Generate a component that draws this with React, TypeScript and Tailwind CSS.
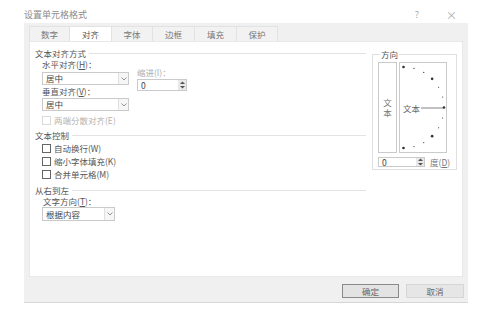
import React from 'react'

const tabs = [
	{ label: '数字', w: 'w-[41px]' },
	{ label: '对齐', w: 'w-[42px]', active: true },
	{ label: '字体', w: 'w-[41px]' },
	{ label: '边框', w: 'w-[42px]' },
	{ label: '填充', w: 'w-[42px]' },
	{ label: '保护', w: 'w-[41px]' },
]

const Chevron = () => (
	<svg width="6" height="4" viewBox="0 0 6 4" fill="none">
		<polyline points="0.5,0.5 3,3 5.5,0.5" stroke="#888" strokeWidth="0.9" />
	</svg>
)

const SpinArrows = () => (
	<svg width="5" height="8" viewBox="0 0 5 8">
		<polygon points="0,3 2.5,0.5 5,3" fill="#555" />
		<polygon points="0,5 2.5,7.5 5,5" fill="#555" />
	</svg>
)

const Dropdown = ({ value, width, height }: { value: string; width: string; height: string }) => (
	<div className={`flex ${width} ${height} border border-[#cacaca] bg-white`}>
		<span className="flex flex-1 items-center pl-[3px] text-[#444]">{value}</span>
		<span className="flex w-[10px] items-center justify-center border-l border-[#e0e0e0] bg-[#f6f6f6]">
			<Chevron />
		</span>
	</div>
)

const Spinner = ({ width, height }: { width: string; height: string }) => (
	<div className={`flex ${width} ${height} border border-[#cacaca] bg-white`}>
		<span className="flex flex-1 items-center pl-[3px] text-[#444]">0</span>
		<span className="flex w-[8px] items-center justify-center bg-[#e8e8e8]">
			<SpinArrows />
		</span>
	</div>
)

const Heading = ({ title }: { title: string }) => (
	<div className="flex h-[10px] items-center gap-[3px] text-[#555]">
		<span>{title}</span>
		<span className="h-px flex-1 bg-[#e3e3e3]" />
	</div>
)

const CheckRow = ({ label, disabled, className }: { label: string; disabled?: boolean; className: string }) => (
	<div className={`flex items-center gap-[3px] pl-[7px] ${className}`}>
		<span
			className={`h-[9px] w-[9px] border bg-white ${disabled ? 'border-[#dadada]' : 'border-[#666]'}`}
		/>
		<span className={disabled ? 'text-[#b4b4b4]' : 'text-[#555]'}>{label}</span>
	</div>
)

const dots = Array.from({ length: 13 }, (_, i) => {
	const a = ((-90 + i * 15) * Math.PI) / 180
	return { x: 3.5 + 40.5 * Math.cos(a), y: 44.5 + 40.5 * Math.sin(a), big: i % 3 === 0 }
})

const OrientationBox = () => (
	<fieldset className="h-[121px] w-[85px] border border-[#e0e0e0] pl-[5px]">
		<legend className="ml-[2px] h-[10px] px-[1px] leading-[10px] text-[#555]">方向</legend>
		<div className="mt-[3px] flex gap-[2px]">
			<div className="flex h-[91px] w-[19px] items-center justify-center border border-[#cacaca] pt-[3px] text-[#777]">
				<span className="leading-[10px] tracking-[1.5px] [writing-mode:vertical-rl]">文本</span>
			</div>
			<div className="relative h-[91px] w-[48px] border border-[#cacaca]">
				<svg width="46" height="89" viewBox="0 0 46 89" className="block">
					<line x1="21" y1="45" x2="43" y2="45" stroke="#666" strokeWidth="0.8" />
					{dots.map((d, i) => (
						<circle key={i} cx={d.x} cy={d.y} r={d.big ? 1.3 : 0.6} fill="#333" />
					))}
				</svg>
				<span className="absolute left-[3px] top-[39px] leading-[12px] text-[#666]">文本</span>
			</div>
		</div>
		<div className="mt-[3px] flex items-center gap-[5px]">
			<Spinner width="w-[47px]" height="h-[10px]" />
			<span className="text-[#777]">度(<u>D</u>)</span>
		</div>
	</fieldset>
)

const AlignmentTab = () => (
	<div className="flex h-[236px] w-[434px] border border-[#e8e8e8] bg-white pl-[5px] pt-[6px]">
		<div className="flex w-[331px] flex-col">
			<Heading title="文本对齐方式" />
			<div className="flex pl-[7px]">
				<div className="flex w-[95px] flex-col">
					<div className="flex h-[12px] items-center text-[#555]">水平对齐(<u>H</u>)：</div>
					<div className="mt-[2px]">
						<Dropdown value="居中" width="w-[87px]" height="h-[13px]" />
					</div>
					<div className="flex h-[13px] items-center text-[#555]">垂直对齐(<u>V</u>)：</div>
					<div>
						<Dropdown value="居中" width="w-[87px]" height="h-[13px]" />
					</div>
				</div>
				<div className="flex flex-col pt-[8px]">
					<div className="flex h-[12px] items-center text-[#adadad]">缩进(I)：</div>
					<div className="mt-[1px]">
						<Spinner width="w-[50px]" height="h-[12px]" />
					</div>
				</div>
			</div>
			<CheckRow label="两端分散对齐(E)" disabled className="mt-[3px] h-[12px]" />
			<div className="mt-[4px]">
				<Heading title="文本控制" />
			</div>
			<CheckRow label="自动换行(W)" className="mt-[2px] h-[12px]" />
			<CheckRow label="缩小字体填充(K)" className="mt-[1px] h-[13px]" />
			<CheckRow label="合并单元格(M)" className="h-[12px]" />
			<div className="mt-[5px]">
				<Heading title="从右到左" />
			</div>
			<div className="flex h-[12px] items-center pl-[8px] text-[#555]">文字方向(<u>T</u>)：</div>
			<div className="pl-[7px]">
				<Dropdown value="根据内容" width="w-[73px]" height="h-[14px]" />
			</div>
		</div>
		<div className="ml-[6px] pt-[1px]">
			<OrientationBox />
		</div>
	</div>
)

export default function App() {
	return (
		<div className="h-[311px] w-[502px] bg-white font-['Noto_Sans_CJK_SC',sans-serif] text-[8.5px]">
			<div className="flex h-[23px] items-center pl-[24px] pr-[45px] pt-[7px]">
				<span className="flex-1 text-[9px] text-[#8a8a8a]">设置单元格格式</span>
				<span className="text-[9px] text-[#aaa]">?</span>
				<span className="ml-[27px] text-[11px] leading-none text-[#aaa]">×</span>
			</div>
			<div className="ml-[24px] flex h-[280px] w-[444px] flex-col border-b border-[#d6d6d6] bg-[#f0f0f0] pl-[5px] pt-[3px]">
				<div className="flex h-[15px]">
					{tabs.map((t) => (
						<div
							key={t.label}
							className={`flex ${t.w} items-center justify-center border-r border-t border-[#e2e2e2] first:border-l ${
								t.active ? 'bg-white text-[#555]' : 'bg-[#f2f2f2] text-[#777]'
							}`}
						>
							{t.label}
						</div>
					))}
				</div>
				<AlignmentTab />
				<div className="mt-[7px] flex justify-end gap-[7px] pr-[4px]">
					<button className="h-[14px] w-[57px] border border-[#8a8a8a] bg-[#e3e3e3] text-[#666]">确定</button>
					<button className="h-[14px] w-[58px] border border-[#d6d6d6] bg-[#e6e6e6] text-[#666]">取消</button>
				</div>
			</div>
		</div>
	)
}
